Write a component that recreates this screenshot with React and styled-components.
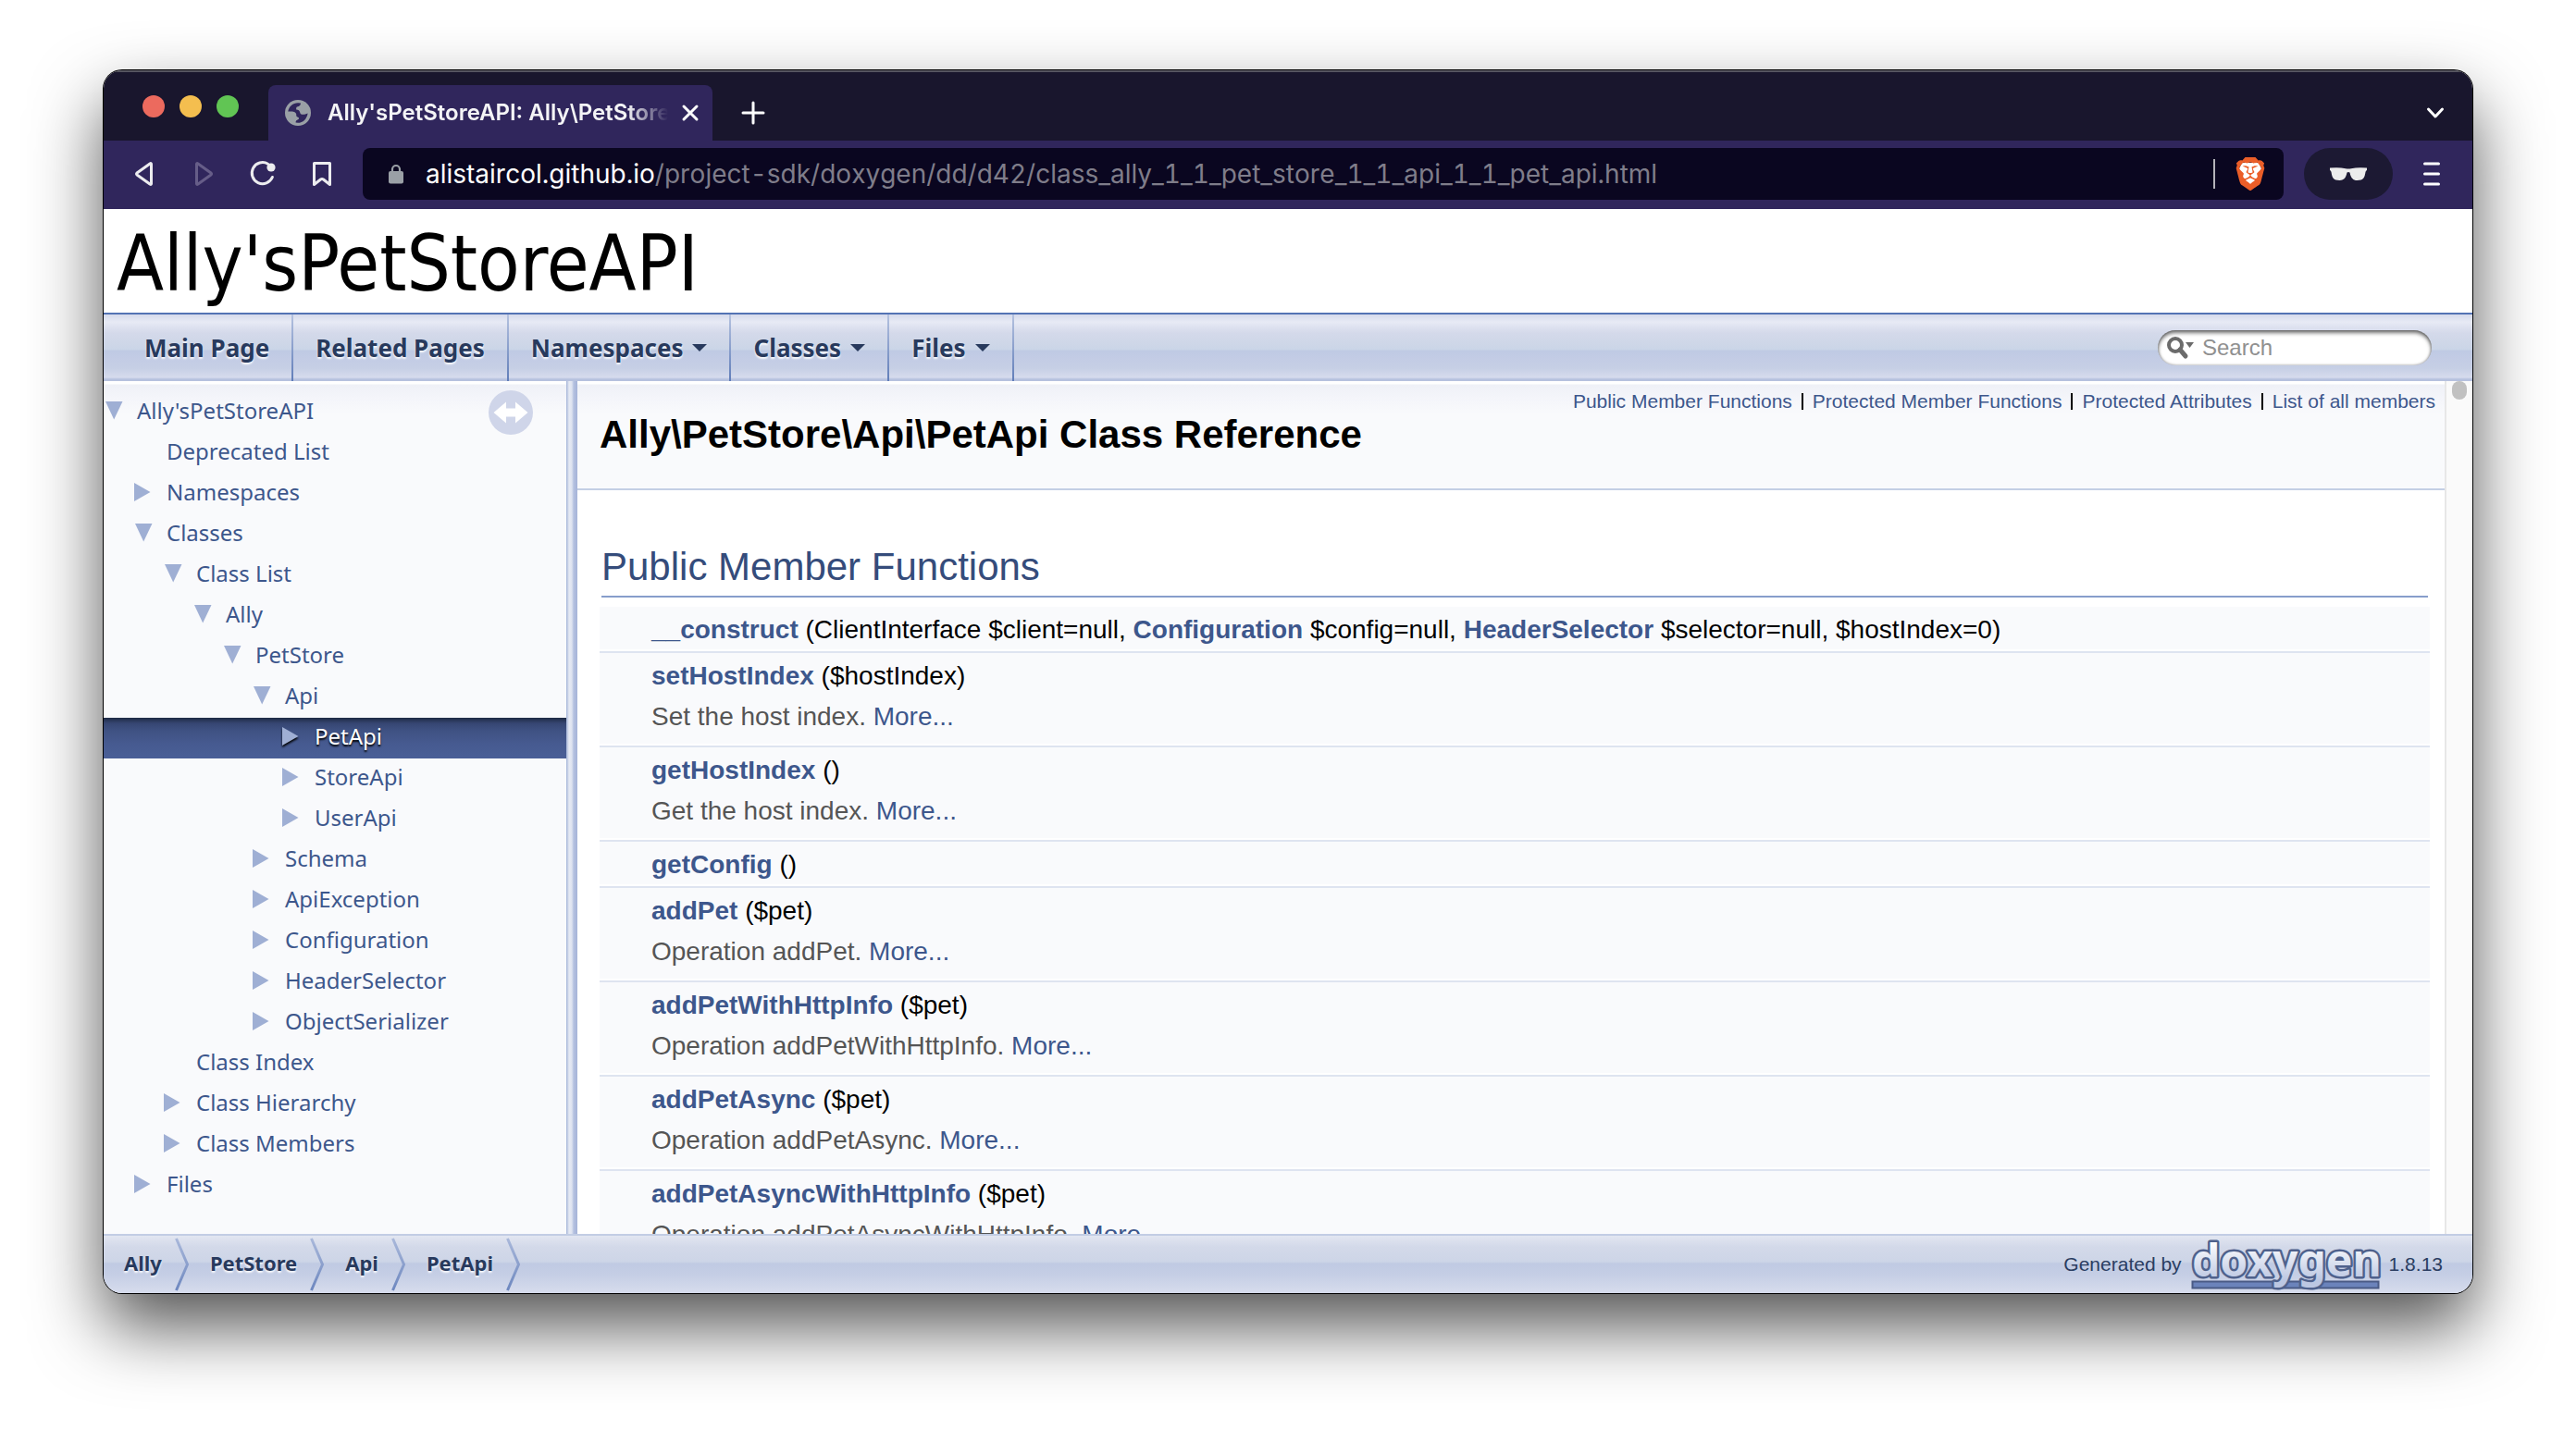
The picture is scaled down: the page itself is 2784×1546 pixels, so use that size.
import React from "react";
import styled, { createGlobalStyle, css } from "styled-components";
import { SiBrave } from "react-icons/si";

const GlobalStyle = createGlobalStyle`
  *, *::before, *::after { box-sizing: border-box; }
  body { margin: 0; background: #fff; }
  a { text-decoration: none; color: inherit; }
  button { border: 0; background: none; padding: 0; margin: 0; font: inherit; color: inherit; }
`;

const sans = `"Liberation Sans", Arial, Helvetica, sans-serif`;
const humanist = `"Noto Sans", "Lucida Grande", sans-serif`;
const chromeFont = `Inter, Roboto, sans-serif`;

const Stage = styled.div`
  display: flex;
  height: 100vh;
  padding: 76px 112px 148px;
  background: #fff;
`;

const Window = styled.div`
  flex: 1;
  min-width: 0;
  display: flex;
  flex-direction: column;
  border-radius: 20px;
  overflow: hidden;
  background: #fff;
  box-shadow: 0 0 0 1px #000, 0 36px 76px rgba(0, 0, 0, 0.68);
`;

/* ---------- browser chrome ---------- */

const TabStrip = styled.div`
  display: flex;
  align-items: flex-end;
  height: 76px;
  flex: none;
  padding: 0 30px 0 42px;
  background: #19162d;
  border-top: 2px solid #565560;
`;

const Lights = styled.div`
  display: flex;
  gap: 16px;
  align-self: flex-start;
  margin: 25px 32px 0 0;
  flex: none;
`;

const Light = styled.button`
  width: 24px;
  height: 24px;
  border-radius: 50%;
  background: ${(p) => p.$color};
`;

const Tab = styled.div`
  display: flex;
  align-items: center;
  width: 480px;
  height: 60px;
  padding: 0 14px 0 18px;
  border-radius: 8px 8px 0 0;
  background: #30265c;
  flex: none;
`;

const TabTitle = styled.span`
  flex: 1;
  min-width: 0;
  margin: 0 14px 0 18px;
  overflow: hidden;
  white-space: nowrap;
  font: 600 24px/32px ${chromeFont};
  color: #f4f4f6;
  mask-image: linear-gradient(to right, #000 88%, transparent);
`;

const IconButton = styled.button`
  display: flex;
  align-items: center;
  justify-content: center;
  width: ${(p) => p.$w || 32}px;
  height: ${(p) => p.$h || 60}px;
  flex: none;
`;

const Spacer = styled.div`
  flex: 1;
`;

const Toolbar = styled.div`
  display: flex;
  align-items: center;
  height: 74px;
  flex: none;
  padding: 8px 28px 10px 28px;
  background: #30265c;
`;

const NavButtons = styled.div`
  display: flex;
  gap: 32px;
  margin-right: 28px;
  flex: none;
`;

const Address = styled.div`
  display: flex;
  align-items: center;
  flex: 1;
  min-width: 0;
  height: 56px;
  padding: 0 18px 0 28px;
  border-radius: 8px;
  background: #0a0620;
  font: 400 28px/36px ${chromeFont};
  font-variant-numeric: tabular-nums;
  font-kerning: none;
  color: #7f7d8a;
  white-space: nowrap;
`;

const Url = styled.span`
  flex: 1;
  margin-left: 24px;
  overflow: hidden;
`;

const Host = styled.span`
  color: #fff;
`;

const Divider = styled.span`
  width: 2px;
  height: 32px;
  margin-right: 20px;
  background: #b4b3ba;
`;

const BraveBadge = styled.button`
  display: grid;
  width: 36px;
  height: 36px;
  color: #eb5e28;
  & > svg { grid-area: 1 / 1; }
`;

const Private = styled.button`
  display: flex;
  align-items: center;
  justify-content: center;
  width: 96px;
  height: 56px;
  margin: 0 26px 0 22px;
  border-radius: 28px;
  background: #1c1933;
  flex: none;
`;

/* ---------- documentation page ---------- */

const Banner = styled.header`
  height: 114px;
  flex: none;
  padding: 0 14px;
  border-bottom: 2px solid #5373b4;
  background: #fff;
`;

const ProjectName = styled.h1`
  margin: 0;
  font: 400 83px/120px "DejaVu Sans Condensed", Tahoma, sans-serif;
  color: #000;
`;

const MenuBar = styled.nav`
  display: flex;
  align-items: center;
  height: 72px;
  flex: none;
  padding: 0 44px 0 20px;
  background: linear-gradient(
    #d5daeb 0, #e7eaf5 8px, #d4d9ea 20px, #cfd7e8 30px, #cad5e7 38px,
    #bfcae4 39px, #c3cce5 48px, #c6cfe5 58px, #d6dbed 68px, #b6c1de 70px, #b6c1de 72px
  );
`;

const MenuItem = styled.a`
  display: flex;
  align-items: center;
  gap: 10px;
  height: 72px;
  padding: 0 24px;
  border-right: 2px solid;
  border-image: linear-gradient(#b6c3e0, #5f7cb8) 1;
  font: 700 26px/36px ${humanist};
  color: #283a5d;
  text-shadow: 0 2px 2px rgba(255, 255, 255, 0.9);
`;

const Caret = styled.span`
  width: 0;
  height: 0;
  border: 8px solid transparent;
  border-top-color: #283a5d;
  border-bottom: 0;
`;

const SearchBox = styled.label`
  display: flex;
  align-items: center;
  width: 296px;
  height: 38px;
  padding: 0 16px 0 8px;
  border-radius: 19px;
  background: #fff;
  box-shadow: inset 0 3px 4px rgba(0, 0, 0, 0.55), inset 0 0 3px rgba(0, 0, 0, 0.4);
`;

const SearchInput = styled.input`
  flex: 1;
  min-width: 0;
  margin-left: 8px;
  padding: 0;
  border: 0;
  outline: 0;
  background: none;
  font: 400 24px/32px ${sans};
  color: #909090;
  &::placeholder { color: #909090; opacity: 1; }
`;

const Body = styled.div`
  display: flex;
  flex: 1;
  min-height: 0;
`;

const paneTop = css`
  background: linear-gradient(#fff 0, #fff 3px, #eff1f7 4px, #f4f5fa 18px, #f9fafc 36px);
`;

const Sidebar = styled.aside`
  position: relative;
  width: 500px;
  flex: none;
  padding-top: 12px;
  overflow: hidden;
  ${paneTop}
`;

const Sync = styled.button`
  position: absolute;
  top: 10px;
  right: 36px;
  width: 48px;
  height: 48px;
`;

const Tree = styled.ul`
  margin: 0;
  padding: 0;
  list-style: none;
`;

const TreeRow = styled.li`
  display: flex;
  align-items: flex-start;
  height: 44px;
  padding-left: ${(p) => p.$level * 32}px;
  font: 400 24px/40px ${humanist};
  color: #3d578c;
  ${(p) =>
    p.$selected &&
    css`
      color: #fff;
      text-shadow: 0 2px 2px #000;
      background: linear-gradient(#1e2a44 0, #364672 6px, #3f5283 14px, #465a90 28px, #4a5f97 44px);
    `}
`;

const Twisty = styled.span`
  display: flex;
  align-items: center;
  width: 36px;
  height: 40px;
  padding-left: 1px;
  flex: none;
  ${(p) => p.$selected && "filter: drop-shadow(0 2px 1px #000);"}
`;

const Splitter = styled.div`
  width: 12px;
  flex: none;
  background: linear-gradient(to right, #a3b4d8 0, #d0d7ea 2px, #e6eaf4 3px, #dde2ef 6px, #b4c1e0 8px, #a5b3d8 12px);
`;

const Content = styled.main`
  flex: 1;
  min-width: 0;
  overflow: hidden;
  background: #fff;
`;

const Header = styled.header`
  height: 118px;
  border-bottom: 2px solid #c4cfe5;
  ${paneTop}
`;

const Summary = styled.div`
  display: flex;
  justify-content: flex-end;
  gap: 10px;
  padding: 8px 10px 0;
  font: 400 21px/28px ${sans};
  color: #3d578c;
`;

const Bar = styled.span`
  width: 2px;
  height: 18px;
  margin-top: 5px;
  background: #000;
`;

const ClassTitle = styled.h2`
  margin: 0;
  padding: 0 24px;
  font: 700 42px/44px ${sans};
  color: #000;
`;

const Contents = styled.div`
  padding: 60px 16px 0 24px;
`;

const GroupHeader = styled.h3`
  margin: 0 2px 10px;
  padding-bottom: 8px;
  border-bottom: 2px solid #879ecb;
  font: 400 42px/46px ${sans};
  color: #354c7b;
`;

const Members = styled.table`
  width: 100%;
  border-collapse: separate;
  border-spacing: 0;
  font: 400 28px/42px ${sans};
  color: #000;
`;

const MemberCell = styled.td`
  padding: 4px 16px ${(p) => (p.$brief ? 8 : 0)}px 56px;
  background: #f9fafc;
  white-space: nowrap;
`;

const Separator = styled.td`
  height: 4px;
  padding: 0;
  border-bottom: 2px solid #dee4f0;
`;

const MemberLink = styled.a`
  font-weight: 700;
  color: #3d578c;
`;

const Brief = styled.div`
  margin-top: 2px;
  color: #555;
  & > a { color: #3d578c; }
`;

const ScrollTrack = styled.div`
  width: 30px;
  flex: none;
  padding-left: 6px;
  border-left: 2px solid #e7e7e7;
  background: #fafafa;
`;

const ScrollThumb = styled.div`
  width: 16px;
  height: 20px;
  border-radius: 8px;
  background: #c1c1c1;
`;

const Footer = styled.footer`
  display: flex;
  align-items: center;
  height: 64px;
  flex: none;
  padding: 0 32px 0 2px;
  border-top: 2px solid #c2cde4;
  background: linear-gradient(#e2e6f1 0, #d3d9e9 12px, #cdd5e7 28px, #c0cae3 30px, #c5cee5 42px, #d5dbec 60px);
`;

const Crumb = styled.a`
  display: flex;
  align-items: center;
  height: 62px;
  padding-left: 20px;
  gap: 14px;
  font: 700 22px/30px ${humanist};
  color: #283a5d;
  text-shadow: 0 2px 2px rgba(255, 255, 255, 0.9);
`;

const CrumbLabel = styled.span`
  padding-bottom: 4px;
`;

const Generated = styled.span`
  display: flex;
  align-items: center;
  gap: 8px;
  font: 400 21px/28px ${sans};
  color: #2a3d61;
  & svg { display: block; }
`;

const LogoText = styled.text`
  font: 700 48px "Noto Sans", "Open Sans", sans-serif;
  paint-order: stroke;
  stroke-linejoin: round;
`;

/* ---------- icons ---------- */

const Globe = () => (
  <svg width="28" height="28" viewBox="0 0 28 28">
    <circle cx="14" cy="14" r="14" fill="#9aa0a6" />
    <path
      fill="#30265c"
      d="M3.300 12.600C4 7.200 8.600 3.200 14 3.200l3 .4c-.2 2.400-1.200 3.200-3 3.600-1.800.3-2 1.300-1.800 3.400 2.400.2 3.600 1 4 2.800.2 1.600 1.200 2.400 3.200 2.400 2 0 3.200-.6 5.200-1.400C23.800 20.300 19.400 24.800 14 24.800l-2.400-.4c0-1.800.6-2.600 2-3 1.400-.4 1.800-1.200 1.200-2.200-.6-.8-1.800-.6-2.400-1.800-.4-1 .2-2.200-.8-3.200-1.200-1.200-3-1.600-8.300-1.600z"
    />
  </svg>
);

const line = { fill: "none", strokeLinecap: "round", strokeLinejoin: "round" };

const CloseIcon = () => (
  <svg width="20" height="20" viewBox="0 0 20 20" {...line} stroke="#fff" strokeWidth="3">
    <path d="M3 3l14 14M17 3L3 17" />
  </svg>
);
const PlusIcon = () => (
  <svg width="26" height="26" viewBox="0 0 26 26" {...line} stroke="#fff" strokeWidth="3">
    <path d="M13 2v22M2 13h22" />
  </svg>
);
const ChevronIcon = () => (
  <svg width="20" height="14" viewBox="0 0 20 14" {...line} stroke="#fff" strokeWidth="3">
    <path d="M2.500 3l7.500 8 7.500-8" />
  </svg>
);
const TriangleIcon = ({ flip, color }) => (
  <svg width="24" height="30" viewBox="0 0 24 30" {...line} stroke={color} strokeWidth="3">
    <path d={flip ? "M4.500 4.500v21q0 1.500 1.500.5l14-10q1-1 0-2L6 4q-1.500-1-1.500.5z" : "M19.500 4.500v21q0 1.500-1.500.5L4 16q-1-1 0-2L18 4q1.500-1 1.500.5z"} />
  </svg>
);
const ReloadIcon = () => (
  <svg width="30" height="30" viewBox="0 0 30 30" {...line} stroke="#ececef" strokeWidth="3">
    <path d="M20.600 4.200A11.500 11.500 0 1 0 25.400 18.500" />
    <circle cx="24" cy="8" r="4.600" fill="#ececef" stroke="none" />
  </svg>
);
const BookmarkIcon = () => (
  <svg width="24" height="30" viewBox="0 0 24 30" {...line} stroke="#ececef" strokeWidth="3">
    <path d="M3.500 3.500h17v23l-7-5.500q-1.500-1-3 0l-7 5.500z" />
  </svg>
);
const LockIcon = () => (
  <svg width="16" height="22" viewBox="0 0 16 22">
    <path d="M4 9V6a4 4 0 0 1 8 0v3" fill="none" stroke="#9aa0a6" strokeWidth="2.200" />
    <rect y="8" width="16" height="13.500" rx="2" fill="#9aa0a6" />
  </svg>
);
const GlassesIcon = () => (
  <svg width="40" height="14" viewBox="0 0 40 14" fill="#ececec">
    <path d="M0 0.500Q10 -.5 17 1.200q3 .6 6 0Q30 -.5 40 .5v2.500q-1.200.6-1.500 2C37.500 11 36.500 14 29.500 14 24 14 22.500 10 21.500 5.500q-1.500-1-3 0C17.500 10 16 14 10.500 14 3.500 14 2.500 11 1.500 5q-.3-1.400-1.500-2z" />
  </svg>
);
const MenuIcon = () => (
  <svg width="20" height="28" viewBox="0 0 20 28" {...line} stroke="#fff" strokeWidth="3">
    <path d="M2.500 3h15M2.500 14h15M2.500 25h15" />
  </svg>
);
const SearchIcon = () => (
  <svg width="32" height="28" viewBox="0 0 32 28">
    <circle cx="11" cy="11" r="7" fill="none" stroke="#6b6b6b" strokeWidth="4" />
    <path d="M16 16l6 7" stroke="#6b6b6b" strokeWidth="5" strokeLinecap="round" />
    <path d="M22 8h9l-4.500 6z" fill="#6b6b6b" />
  </svg>
);
const SyncIcon = () => (
  <svg width="48" height="48" viewBox="0 0 48 48">
    <circle cx="24" cy="24" r="24" fill="#cfd5e9" />
    <path d="M5.500 24L19 12.500v7h10v-7L42.500 24 29 35.500v-7H19v7z" fill="#fff" />
  </svg>
);
const ArrowIcon = ({ open }) => (
  <svg width="20" height="20" viewBox="0 0 20 20" fill="#9fafd4">
    <path d={open ? "M1 0h18.500L10.200 19.500z" : "M0 0l17.500 10L0 20z"} />
  </svg>
);
const CrumbSep = () => (
  <svg width="18" height="60" viewBox="0 0 18 60" fill="none" strokeWidth="3">
    <defs>
      <linearGradient id="crumb" x1="0" y1="0" x2="0" y2="1">
        <stop offset="0" stopColor="#a9b8da" />
        <stop offset="1" stopColor="#6d87bf" />
      </linearGradient>
    </defs>
    <path d="M1.500 2L13.500 30 1.500 58" stroke="url(#crumb)" />
  </svg>
);
const DoxygenLogo = () => (
  <svg width="208" height="62" viewBox="0 0 208 62" role="img" aria-label="doxygen">
    <defs>
      <linearGradient id="dox" x1="0" y1="0" x2="0" y2="1">
        <stop offset="0.200" stopColor="#ffffff" />
        <stop offset="0.850" stopColor="#bcc7e2" />
      </linearGradient>
    </defs>
    <rect x="3.500" y="49.500" width="201" height="7" fill="#6b83bb" stroke="#4a5b85" strokeWidth="2" />
    <LogoText x="3" y="44" fill="url(#dox)" stroke="#4f618c" strokeWidth="5">doxygen</LogoText>
  </svg>
);

/* ---------- data ---------- */

const MENU = [
  { label: "Main Page" },
  { label: "Related Pages" },
  { label: "Namespaces", sub: true },
  { label: "Classes", sub: true },
  { label: "Files", sub: true },
];

const TREE = [
  ["Ally'sPetStoreAPI", 0, "open"],
  ["Deprecated List", 1],
  ["Namespaces", 1, "closed"],
  ["Classes", 1, "open"],
  ["Class List", 2, "open"],
  ["Ally", 3, "open"],
  ["PetStore", 4, "open"],
  ["Api", 5, "open"],
  ["PetApi", 6, "closed", true],
  ["StoreApi", 6, "closed"],
  ["UserApi", 6, "closed"],
  ["Schema", 5, "closed"],
  ["ApiException", 5, "closed"],
  ["Configuration", 5, "closed"],
  ["HeaderSelector", 5, "closed"],
  ["ObjectSerializer", 5, "closed"],
  ["Class Index", 2],
  ["Class Hierarchy", 2, "closed"],
  ["Class Members", 2, "closed"],
  ["Files", 1, "closed"],
];

const SUMMARY = ["Public Member Functions", "Protected Member Functions", "Protected Attributes", "List of all members"];

const MEMBERS = [
  {
    name: "__construct",
    args: (
      <>
        (ClientInterface $client=null, <MemberLink href="#Configuration">Configuration</MemberLink> $config=null,{" "}
        <MemberLink href="#HeaderSelector">HeaderSelector</MemberLink> $selector=null, $hostIndex=0)
      </>
    ),
  },
  { name: "setHostIndex", args: "($hostIndex)", brief: "Set the host index." },
  { name: "getHostIndex", args: "()", brief: "Get the host index." },
  { name: "getConfig", args: "()" },
  { name: "addPet", args: "($pet)", brief: "Operation addPet." },
  { name: "addPetWithHttpInfo", args: "($pet)", brief: "Operation addPetWithHttpInfo." },
  { name: "addPetAsync", args: "($pet)", brief: "Operation addPetAsync." },
  { name: "addPetAsyncWithHttpInfo", args: "($pet)", brief: "Operation addPetAsyncWithHttpInfo." },
];

const CRUMBS = ["Ally", "PetStore", "Api", "PetApi"];

export default function App() {
  return (
    <Stage>
      <GlobalStyle />
      <Window>
        <TabStrip>
          <Lights>
            <Light $color="#ec6a5e" aria-label="Close window" />
            <Light $color="#f4be4f" aria-label="Minimise window" />
            <Light $color="#61c554" aria-label="Zoom window" />
          </Lights>
          <Tab>
            <Globe />
            <TabTitle>Ally'sPetStoreAPI: Ally\PetStore</TabTitle>
            <IconButton $w={20} aria-label="Close tab"><CloseIcon /></IconButton>
          </Tab>
          <IconButton $w={88} aria-label="New tab"><PlusIcon /></IconButton>
          <Spacer />
          <IconButton $w={20} aria-label="Search tabs"><ChevronIcon /></IconButton>
        </TabStrip>

        <Toolbar>
          <NavButtons>
            <IconButton aria-label="Back"><TriangleIcon color="#ececef" /></IconButton>
            <IconButton aria-label="Forward"><TriangleIcon flip color="#665d88" /></IconButton>
            <IconButton aria-label="Reload"><ReloadIcon /></IconButton>
            <IconButton aria-label="Bookmark"><BookmarkIcon /></IconButton>
          </NavButtons>
          <Address role="textbox" aria-label="Address">
            <LockIcon />
            <Url>
              <Host>alistaircol.github.io</Host>
              /project-sdk/doxygen/dd/d42/class_ally_1_1_pet_store_1_1_api_1_1_pet_api.html
            </Url>
            <Divider />
            <BraveBadge aria-label="Brave Shields">
              <svg width="36" height="36" viewBox="0 0 36 36">
                <path d="M9 6h18l3 6-3 14-9 6-9-6-3-14z" fill="#fff" />
              </svg>
              <SiBrave size={36} />
            </BraveBadge>
          </Address>
          <Private aria-label="Private window"><GlassesIcon /></Private>
          <IconButton aria-label="Menu"><MenuIcon /></IconButton>
        </Toolbar>

        <Banner>
          <ProjectName>Ally'sPetStoreAPI</ProjectName>
        </Banner>

        <MenuBar>
          {MENU.map((m) => (
            <MenuItem key={m.label} href="#menu">
              {m.label}
              {m.sub && <Caret />}
            </MenuItem>
          ))}
          <Spacer />
          <SearchBox>
            <SearchIcon />
            <SearchInput type="text" placeholder="Search" aria-label="Search" />
          </SearchBox>
        </MenuBar>

        <Body>
          <Sidebar>
            <Tree>
              {TREE.map(([label, level, state, selected]) => (
                <TreeRow key={label + level} $level={level} $selected={selected}>
                  <Twisty $selected={selected}>{state && <ArrowIcon open={state === "open"} />}</Twisty>
                  <a href="#tree">{label}</a>
                </TreeRow>
              ))}
            </Tree>
            <Sync aria-label="Toggle panel synchronisation"><SyncIcon /></Sync>
          </Sidebar>
          <Splitter />
          <Content>
            <Header>
              <Summary>
                {SUMMARY.map((s, i) => (
                  <React.Fragment key={s}>
                    {i > 0 && <Bar />}
                    <a href="#summary">{s}</a>
                  </React.Fragment>
                ))}
              </Summary>
              <ClassTitle>Ally\PetStore\Api\PetApi Class Reference</ClassTitle>
            </Header>
            <Contents>
              <GroupHeader>Public Member Functions</GroupHeader>
              <Members>
                <tbody>
                  {MEMBERS.map((m) => (
                    <React.Fragment key={m.name}>
                      <tr>
                        <MemberCell $brief={!!m.brief}>
                          <MemberLink href="#member">{m.name}</MemberLink> {m.args}
                          {m.brief && (
                            <Brief>
                              {m.brief} <a href="#more">More...</a>
                            </Brief>
                          )}
                        </MemberCell>
                      </tr>
                      <tr>
                        <Separator />
                      </tr>
                    </React.Fragment>
                  ))}
                </tbody>
              </Members>
            </Contents>
          </Content>
          <ScrollTrack>
            <ScrollThumb />
          </ScrollTrack>
        </Body>

        <Footer>
          {CRUMBS.map((c) => (
            <Crumb key={c} href="#crumb">
              <CrumbLabel>{c}</CrumbLabel>
              <CrumbSep />
            </Crumb>
          ))}
          <Spacer />
          <Generated>
            Generated by
            <a href="#doxygen"><DoxygenLogo /></a>
            1.8.13
          </Generated>
        </Footer>
      </Window>
    </Stage>
  );
}
